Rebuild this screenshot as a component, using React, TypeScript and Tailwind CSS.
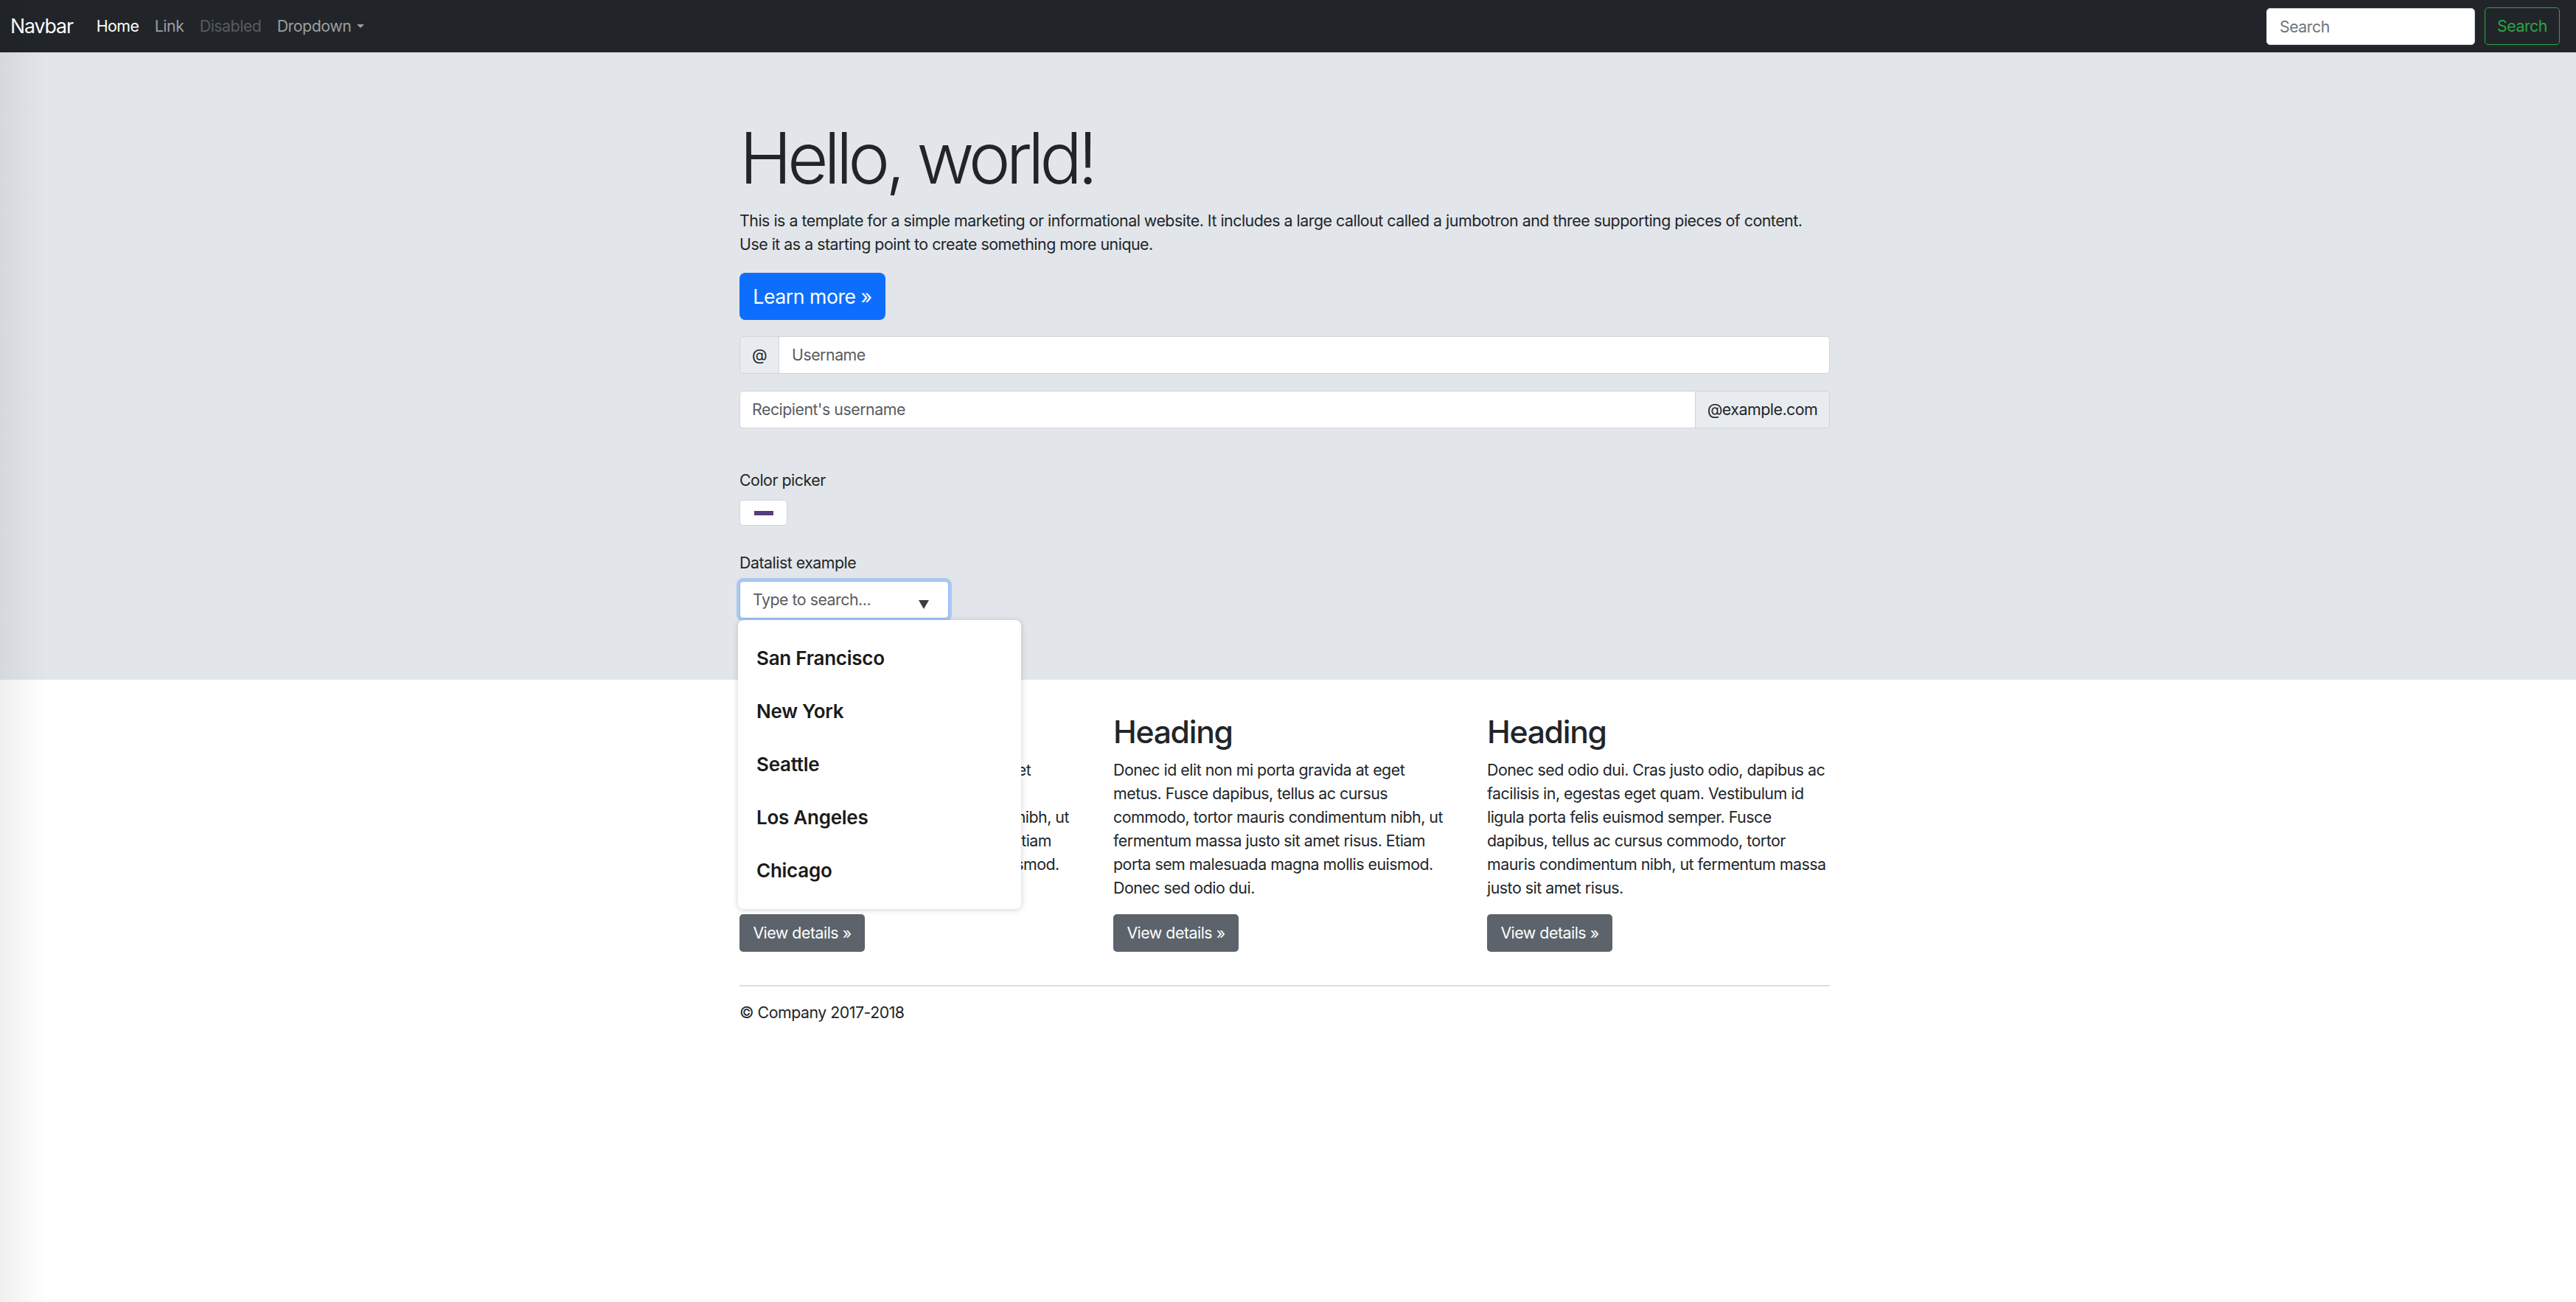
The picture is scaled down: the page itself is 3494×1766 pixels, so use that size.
import React from 'react'

const cities = ['San Francisco', 'New York', 'Seattle', 'Los Angeles', 'Chicago']

const columns = [
  'Donec id elit non mi porta gravida at eget metus. Fusce dapibus, tellus ac cursus commodo, tortor mauris condimentum nibh, ut fermentum massa justo sit amet risus. Etiam porta sem malesuada magna mollis euismod. Donec sed odio dui.',
  'Donec id elit non mi porta gravida at eget metus. Fusce dapibus, tellus ac cursus commodo, tortor mauris condimentum nibh, ut fermentum massa justo sit amet risus. Etiam porta sem malesuada magna mollis euismod. Donec sed odio dui.',
  'Donec sed odio dui. Cras justo odio, dapibus ac facilisis in, egestas eget quam. Vestibulum id ligula porta felis euismod semper. Fusce dapibus, tellus ac cursus commodo, tortor mauris condimentum nibh, ut fermentum massa justo sit amet risus.',
]

function Navbar() {
  return (
    <nav className="h-[71px] bg-[#212529] flex items-center pl-[14px] pr-[22px]">
      <a href="#" className="text-[26.67px] leading-none tracking-[-0.04em] text-white mr-[21px]">
        Navbar
      </a>
      <ul className="flex items-center text-[21.33px] leading-none">
        <li>
          <a href="#" className="block px-[10.67px] text-white">Home</a>
        </li>
        <li>
          <a href="#" className="block px-[10.67px] text-[#9c9ea0]">Link</a>
        </li>
        <li>
          <span className="block px-[10.67px] text-[#585b5e]">Disabled</span>
        </li>
        <li>
          <a href="#" className="flex items-center gap-[8px] px-[10.67px] text-[#9c9ea0]">
            Dropdown
            <span className="w-0 h-0 border-x-[5px] border-x-transparent border-t-[5px] border-t-[#9c9ea0] mt-[1px]" />
          </a>
        </li>
      </ul>
      <form className="ml-auto flex items-center gap-[13px]">
        <input
          placeholder="Search"
          className="w-[283px] h-[50px] rounded-[5px] border border-[#ced4da] bg-white px-[17px] text-[21.33px] text-[#212529] placeholder:text-[#6c757d] outline-none"
        />
        <button
          type="button"
          className="w-[102px] h-[51px] rounded-[5px] border border-[#28a745] text-[#28a745] text-[21.33px]"
        >
          Search
        </button>
      </form>
    </nav>
  )
}

function Jumbotron() {
  return (
    <section className="bg-[#e2e6ea] pt-[86px] pb-[83px]">
      <div className="mx-auto w-[1488px] pr-[9px]">
        <h1 className="text-[96px] font-light leading-[1.2] tracking-[-0.063em] mb-[11px]">Hello, world!</h1>
        <p className="text-[21.33px] leading-[32px] mb-[23px]">
          This is a template for a simple marketing or informational website. It includes a large callout called a
          jumbotron and three supporting pieces of content. Use it as a starting point to create something more unique.
        </p>
        <button type="button" className="w-[198px] h-[64px] rounded-[8px] bg-[#0d6efd] text-white text-[26.67px]">
          Learn more »
        </button>

        <div className="mt-[22px] flex h-[51px] text-[21.33px]">
          <span className="w-[54px] flex items-center justify-center bg-[#e9ecef] border border-[#ced4da] rounded-l-[5px]">
            @
          </span>
          <input
            placeholder="Username"
            className="flex-1 -ml-px bg-white border border-[#ced4da] rounded-r-[5px] px-[17px] placeholder:text-[#595c5f] outline-none"
          />
        </div>

        <div className="mt-[23px] flex h-[51px] text-[21.33px]">
          <input
            placeholder="Recipient's username"
            className="flex-1 bg-white border border-[#ced4da] rounded-l-[5px] px-[16px] placeholder:text-[#595c5f] outline-none"
          />
          <span className="w-[183px] -ml-px flex items-center justify-center bg-[#e9ecef] border border-[#ced4da] rounded-r-[5px] text-[#212529]">
            @example.com
          </span>
        </div>

        <label className="block mt-[54px] text-[21.33px] leading-[32px]">Color picker</label>
        <div className="mt-[11px] w-[65px] h-[35px] flex items-center justify-center bg-white border border-[#ced4da] rounded-[5px]">
          <div className="w-[26px] h-[6px] bg-[#563d7c]" />
        </div>

        <label className="block mt-[34px] text-[21.33px] leading-[32px]">Datalist example</label>
        <div className="relative mt-[9px] w-[284px] h-[51px]">
          <div className="h-full flex items-center bg-white border border-[#86b7fe] rounded-[5px] shadow-[0_0_0_4px_rgba(13,110,253,0.25)] pl-[17px] pr-[26px]">
            <span className="flex-1 text-[21.33px] text-[#595c5f]">Type to search...</span>
            <svg width="14" height="12" viewBox="0 0 14 12" className="mt-[13px]">
              <path d="M0 0h14L7 12z" fill="#3a3d40" />
            </svg>
          </div>
          <ul className="absolute z-10 top-[53px] left-[-2px] w-[384px] bg-white rounded-[8px] py-[16px] shadow-[0_1px_8px_rgba(0,0,0,0.18)]">
            {cities.map((c) => (
              <li
                key={c}
                className="h-[72px] leading-[72px] pl-[25px] text-[26px] font-semibold tracking-[-0.01em] text-[#1a1a1a]"
              >
                {c}
              </li>
            ))}
          </ul>
        </div>
      </div>
    </section>
  )
}

export default function App() {
  return (
    <div className="relative min-h-screen bg-white text-[#212529] font-[Inter,sans-serif] tracking-[-0.03em]">
      <Navbar />
      <Jumbotron />
      <main className="mx-auto w-[1488px] pr-[9px] pt-[45px]">
        <div className="grid grid-cols-3 gap-x-[42px]">
          {columns.map((text, i) => (
            <div key={i}>
              <h2 className="text-[42.67px] font-medium leading-[1.2] tracking-[-0.03em] mb-[10px]">Heading</h2>
              <p className="text-[21.33px] leading-[32px] mb-[20px]">{text}</p>
              <button type="button" className="w-[170px] h-[51px] rounded-[5px] bg-[#5c636a] text-white text-[21.33px]">
                View details »
              </button>
            </div>
          ))}
        </div>
        <hr className="mt-[45px] border-0 border-t-2 border-[#dedede]" />
        <footer className="mt-[19px] text-[21.33px] leading-[32px]">© Company 2017-2018</footer>
      </main>
      <div className="pointer-events-none absolute inset-y-0 left-0 w-[64px] bg-linear-to-r from-black/[0.06] to-transparent" />
    </div>
  )
}
